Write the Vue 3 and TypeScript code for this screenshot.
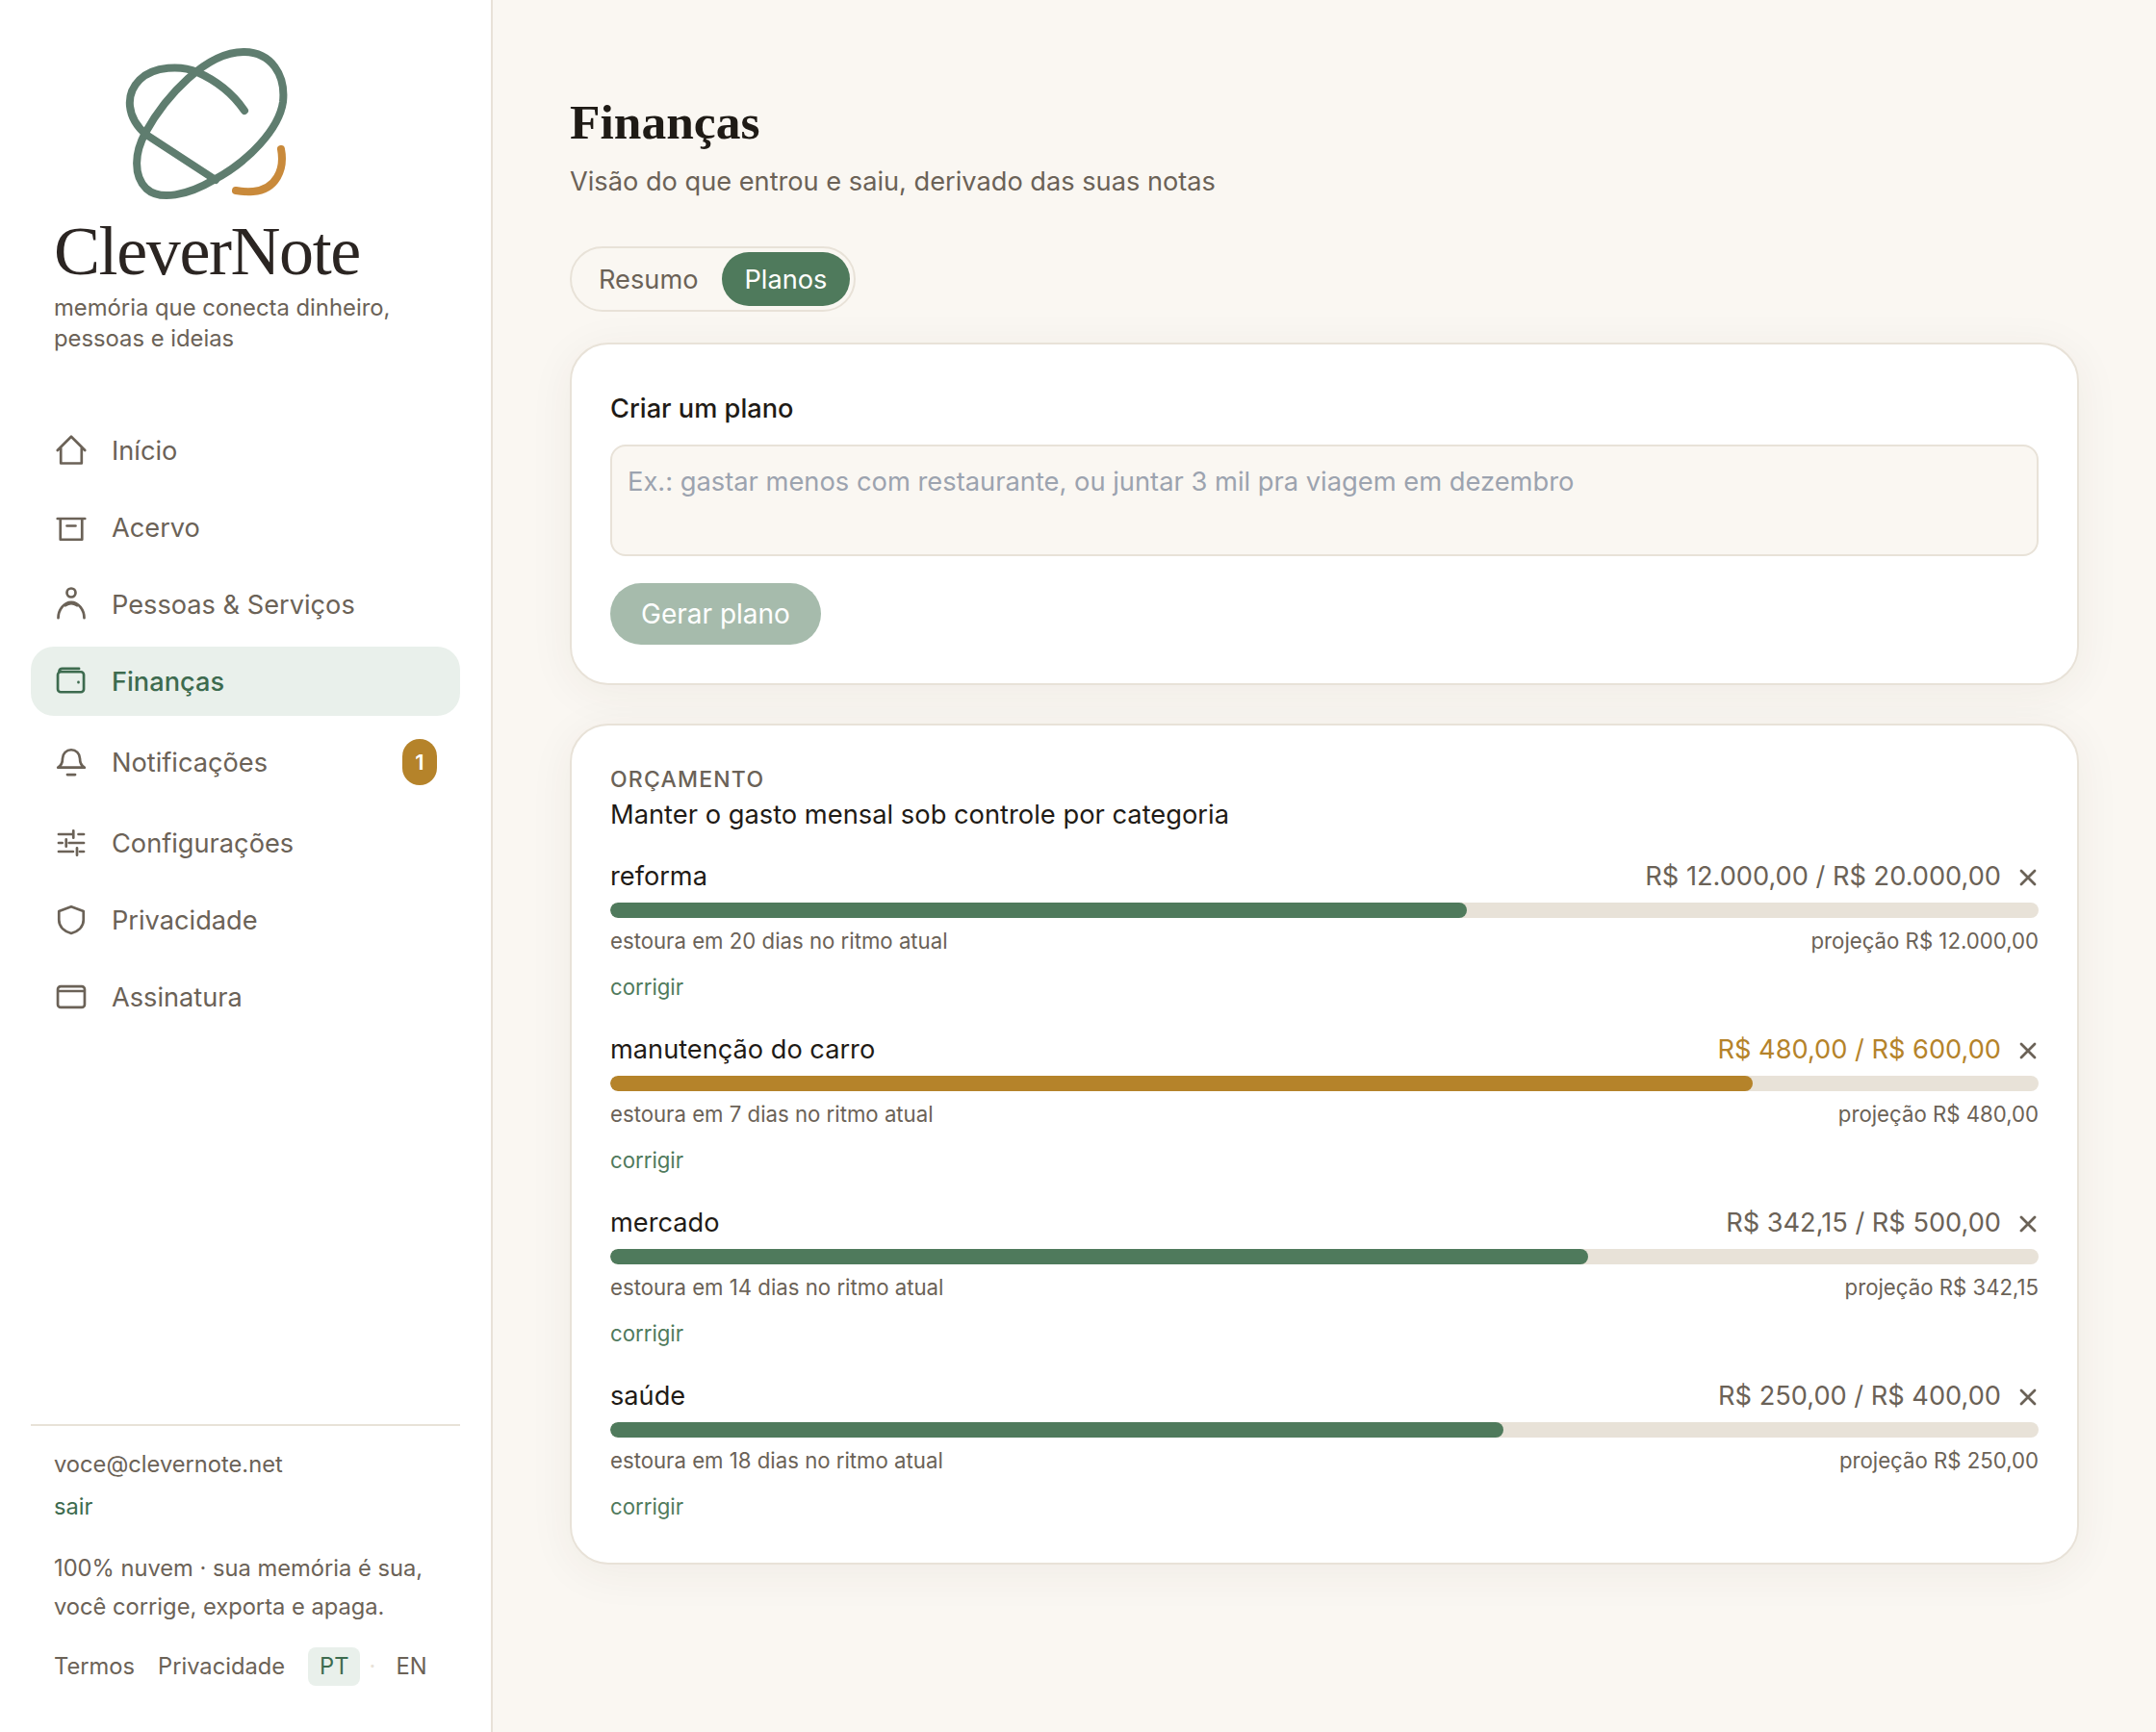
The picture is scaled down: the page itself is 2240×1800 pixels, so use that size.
<script setup lang="ts">
import { ref } from 'vue'

interface NavItem {
  label: string
  icon: string
  active?: boolean
  badge?: number
}

interface Budget {
  name: string
  spent: string
  limit: string
  pct: number
  days: number
  warn?: boolean
}

const nav: NavItem[] = [
  { label: 'Início', icon: 'M2.5 12 12 2.5l9.5 9.5M4.8 10.500V21h14.400V10.500' },
  { label: 'Acervo', icon: 'M2.500 6h19M4.500 6v14.500h15V6M9 11h6' },
  { label: 'Pessoas & Serviços', icon: 'M15 4a3 3 0 1 1-6 0 3 3 0 0 1 6 0zM3 21.500c0-5.500 4-11 9-11s9 5.500 9 11M8 12.800c2.500-1.800 5.500-1.800 8 0' },
  { label: 'Finanças', icon: 'M2.700 7.500a2 2 0 0 1 2-2h14a2 2 0 0 1 2 2v10a2 2 0 0 1-2 2h-14a2 2 0 0 1-2-2zM3.600 5.200c.2-1.200 1-1.900 2.200-1.900h11.600M17 12.600v.2', active: true },
  { label: 'Notificações', icon: 'M6 9.500a6 6 0 0 1 12 0c0 3 .8 4.900 3.200 6.300H2.800C5.200 14.400 6 12.500 6 9.500zM9.300 20.700h5.400', badge: 1 },
  { label: 'Configurações', icon: 'M3.300 6h10M17 6h3.700M13.500 3.500v5M3.300 12h2.500M8.500 9.500v5M10.500 12h10.200M3.300 18h10M16 15.500v5M18 18h2.700' },
  { label: 'Privacidade', icon: 'M12 2.800 20.500 6v6c0 4.800-3.800 8-8.500 9.300C7.300 20 3.500 16.800 3.500 12V6z' },
  { label: 'Assinatura', icon: 'M2.700 6.700a2 2 0 0 1 2-2h14.600a2 2 0 0 1 2 2v10.600a2 2 0 0 1-2 2H4.700a2 2 0 0 1-2-2zM2.700 8h18.600' },
]

const budgets: Budget[] = [
  { name: 'reforma', spent: 'R$ 12.000,00', limit: 'R$ 20.000,00', pct: 60, days: 20 },
  { name: 'manutenção do carro', spent: 'R$ 480,00', limit: 'R$ 600,00', pct: 80, days: 7, warn: true },
  { name: 'mercado', spent: 'R$ 342,15', limit: 'R$ 500,00', pct: 68.43, days: 14 },
  { name: 'saúde', spent: 'R$ 250,00', limit: 'R$ 400,00', pct: 62.5, days: 18 },
]

const planText = ref('')
</script>

<template>
  <div class="shell">
    <aside class="sidebar">
      <div class="brand">
        <svg class="logo" viewBox="56 40 320 180" fill="none" stroke-linecap="round" stroke-linejoin="round">
          <path stroke="#5f7d6f" stroke-width="8" d="M222 187C195 203 166 209 152 196 138 182 140 158 151 138 172 100 214 54 253 54 282 54 297 78 294 106 290 134 258 168 222 187Z" />
          <path stroke="#5f7d6f" stroke-width="8" d="M254 115C241 96 223 83 205 75 189 68 160 68 145 83 130 98 131 122 152 140L224 187" />
          <path stroke="#c98a3b" stroke-width="8" d="M292 155C296 176 287 197 263 199 255 199.500 250 199 245 198" />
        </svg>
        <div class="wordmark">CleverNote</div>
        <p class="tagline">memória que conecta dinheiro, pessoas e ideias</p>
      </div>

      <nav class="nav">
        <a v-for="item in nav" :key="item.label" class="nav-item" :class="{ active: item.active }">
          <svg class="nav-icon" viewBox="0 0 24 24" fill="none" stroke="currentColor" stroke-width="1.800" stroke-linecap="round" stroke-linejoin="round">
            <path :d="item.icon" />
          </svg>
          <span class="nav-label">{{ item.label }}</span>
          <span v-if="item.badge" class="badge">{{ item.badge }}</span>
        </a>
      </nav>

      <div class="side-foot">
        <div class="email">voce@clevernote.net</div>
        <a class="logout">sair</a>
        <p class="disclaimer">100% nuvem · sua memória é sua,<br />você corrige, exporta e apaga.</p>
        <div class="legal">
          <a>Termos</a>
          <a>Privacidade</a>
          <div class="langs">
            <span class="lang current">PT</span>
            <span class="lang-dot">·</span>
            <span class="lang">EN</span>
          </div>
        </div>
      </div>
    </aside>

    <main class="main">
      <h1>Finanças</h1>
      <p class="subtitle">Visão do que entrou e saiu, derivado das suas notas</p>

      <div class="tabs">
        <button class="tab">Resumo</button>
        <button class="tab on">Planos</button>
      </div>

      <section class="card create">
        <h2>Criar um plano</h2>
        <textarea v-model="planText" placeholder="Ex.: gastar menos com restaurante, ou juntar 3 mil pra viagem em dezembro"></textarea>
        <button class="generate" disabled>Gerar plano</button>
      </section>

      <section class="card budget">
        <div class="eyebrow">Orçamento</div>
        <h3>Manter o gasto mensal sob controle por categoria</h3>
        <div v-for="b in budgets" :key="b.name" class="row">
          <div class="row-top">
            <span class="row-name">{{ b.name }}</span>
            <span class="row-value" :class="{ warn: b.warn }">{{ b.spent }} / {{ b.limit }}</span>
            <svg class="close" viewBox="0 0 18 18" fill="none" stroke="currentColor" stroke-width="2.800" stroke-linecap="round">
              <path d="M2 2l14 14M16 2 2 16" />
            </svg>
          </div>
          <div class="track">
            <div class="fill" :class="{ warn: b.warn }" :style="{ width: b.pct + '%' }"></div>
          </div>
          <div class="row-meta">
            <span>estoura em {{ b.days }} dias no ritmo atual</span>
            <span>projeção {{ b.spent }}</span>
          </div>
          <a class="fix">corrigir</a>
        </div>
      </section>
    </main>
  </div>
</template>

<style>
body {
  background: #faf7f2;
}
</style>

<style scoped>
* {
  box-sizing: border-box;
  margin: 0;
}
.shell {
  display: grid;
  grid-template-columns: 512px 1fr;
  min-height: 1800px;
  font-family: Inter, "Noto Sans", sans-serif;
  color: #1f1b16;
  background: #faf7f2;
}

/* sidebar */
.sidebar {
  display: flex;
  flex-direction: column;
  padding: 40px 32px 48px;
  background: #fff;
  border-right: 2px solid #e8e2d8;
}
.brand {
  padding-left: 24px;
}
.logo {
  display: block;
  width: 320px;
  height: 180px;
}
.wordmark {
  margin-top: 5px;
  font-family: "Liberation Serif", serif;
  font-size: 72px;
  line-height: 72px;
  letter-spacing: -1.400px;
  color: #2b2522;
}
.tagline {
  margin-top: 7px;
  width: 380px;
  font-size: 23.800px;
  line-height: 32px;
  color: #6b6257;
}
.nav {
  display: flex;
  flex-direction: column;
  gap: 8px;
  margin-top: 64px;
}
.nav-item {
  display: flex;
  align-items: center;
  gap: 24px;
  padding: 17px 24px 15px;
  font-size: 27.200px;
  line-height: 40px;
  color: #6b6257;
  border-radius: 24px;
}
.nav-item.active {
  background: #e9f0eb;
  color: #3d6b4f;
  font-weight: 500;
}
.nav-icon {
  width: 36px;
  height: 36px;
  flex: none;
  margin-top: -2px;
}
.nav-label {
  flex: 1;
}
.badge {
  width: 36px;
  height: 48px;
  margin: -1px 0 1px;
  border-radius: 18px;
  background: #b5832a;
  color: #fff;
  font-size: 22px;
  font-weight: 600;
  line-height: 48px;
  text-align: center;
}
.side-foot {
  margin-top: auto;
  padding: 22px 24px 0;
  border-top: 2px solid #e8e2d8;
  font-size: 23.700px;
  color: #6b6257;
}
.email,
.logout {
  display: block;
  line-height: 36px;
}
.logout {
  margin-top: 8px;
  color: #3d6b4f;
}
.disclaimer {
  margin-top: 26px;
  line-height: 40px;
}
.legal {
  display: flex;
  align-items: center;
  gap: 24px;
  margin-top: 22px;
  line-height: 40px;
}
.langs {
  display: flex;
  align-items: center;
}
.lang {
  padding: 0 12px;
  border-radius: 8px;
}
.lang.current {
  background: #e9f0eb;
  color: #3d6b4f;
}
.lang-dot {
  width: 25px;
  text-align: center;
  color: #e8e2d8;
}

/* main column */
.main {
  padding: 95px 80px 0;
}
h1 {
  font-family: "Liberation Serif", serif;
  font-size: 51.500px;
  font-weight: 700;
  line-height: 64px;
}
.subtitle {
  margin-top: 10px;
  font-size: 27.200px;
  line-height: 40px;
  color: #6b6257;
}
.tabs {
  display: inline-flex;
  margin-top: 47px;
  padding: 4px;
  border: 2px solid #e8e2d8;
  border-radius: 34px;
  background: #faf7f2;
  vertical-align: top;
}
.tab {
  height: 56px;
  padding: 0 24px;
  border: 0;
  border-radius: 28px;
  background: transparent;
  font: inherit;
  font-size: 27.200px;
  color: #6b6257;
}
.tab.on {
  background: #4f7a5c;
  color: #fff;
}
.card {
  background: #fff;
  border: 2px solid #e8e2d8;
  border-radius: 40px;
  padding: 40px;
  box-shadow: 0 8px 48px rgba(70, 55, 30, 0.06);
}
.create {
  margin-top: 32px;
}
h2 {
  margin-top: 7px;
  font-size: 27.200px;
  font-weight: 500;
  line-height: 40px;
}
textarea {
  display: block;
  width: 100%;
  height: 116px;
  margin-top: 17px;
  padding: 17px 16px 15px;
  border: 2px solid #e8e2d8;
  border-radius: 16px;
  background: #faf7f2;
  font: inherit;
  font-size: 27.300px;
  line-height: 40px;
  resize: none;
  outline: none;
}
textarea::placeholder {
  color: #9ca3af;
}
.generate {
  display: block;
  height: 64px;
  margin-top: 28px;
  padding: 0 32px;
  border: 0;
  border-radius: 32px;
  background: #4f7a5c;
  opacity: 0.5;
  color: #fff;
  font: inherit;
  font-size: 28px;
}
.budget {
  margin-top: 40px;
  padding-top: 41px;
  padding-bottom: 42px;
}
.eyebrow {
  font-size: 23px;
  line-height: 31px;
  font-weight: 500;
  letter-spacing: 1.200px;
  text-transform: uppercase;
  color: #6b6257;
}
h3 {
  padding-top: 1px;
  margin-bottom: -1px;
  font-size: 27.300px;
  font-weight: 400;
  line-height: 40px;
}
.row {
  padding-top: 24px;
}
.row + .row {
  padding-top: 28px;
}
.row-top {
  display: flex;
  align-items: center;
  padding-top: 1px;
  font-size: 27.200px;
  line-height: 40px;
}
.row-name {
  flex: 1;
}
.row-value {
  color: #6b6257;
}
.row-value.warn {
  color: #b5832a;
}
.close {
  width: 18px;
  height: 18px;
  margin: 2px 2px 0 19px;
  color: #6b6257;
}
.track {
  height: 16px;
  margin-top: 7px;
  border-radius: 8px;
  background: #e8e2d8;
  overflow: hidden;
}
.fill {
  height: 100%;
  border-radius: 8px;
  background: #4f7a5c;
}
.fill.warn {
  background: #b5832a;
}
.row-meta {
  display: flex;
  justify-content: space-between;
  margin-top: 8px;
  font-size: 22.200px;
  line-height: 32px;
  color: #6b6257;
}
.fix {
  display: block;
  margin-top: 16px;
  font-size: 22.200px;
  line-height: 32px;
  color: #4f7a5c;
}
</style>
